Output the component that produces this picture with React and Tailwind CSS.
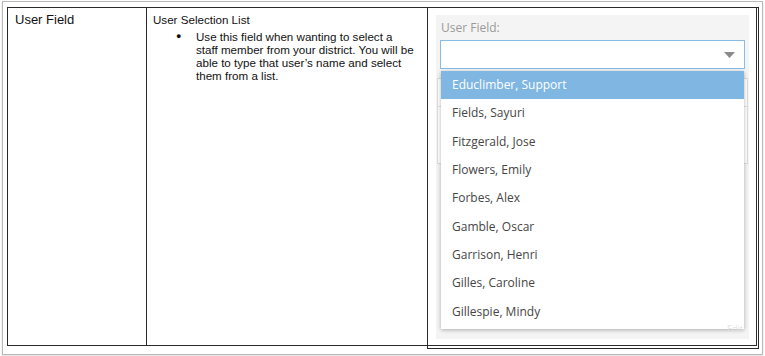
import React from "react";

const users = [
  "Educlimber, Support",
  "Fields, Sayuri",
  "Fitzgerald, Jose",
  "Flowers, Emily",
  "Forbes, Alex",
  "Gamble, Oscar",
  "Garrison, Henri",
  "Gilles, Caroline",
  "Gillespie, Mindy",
];

function UserFieldPreview() {
  return (
    <div className="relative ml-[8px] mr-[9px] mt-[7px] bg-[#f4f4f4] h-[324px] px-[4px] pt-[5px] font-['Open_Sans',sans-serif]">
      <div className="text-[12px] leading-[16px] text-[#9a9a9a] pl-[1px]">User Field:</div>

      {/* select box */}
      <div className="mt-[4px] h-[29px] bg-white border border-[#86bce6] flex items-center justify-end pr-[9px]">
        <svg width="11" height="6" viewBox="0 0 11 6">
          <path d="M0 0 L11 0 L5.5 6 Z" fill="#8a8a8a" />
        </svg>
      </div>

      {/* next field, hidden behind the open list */}
      <div className="mt-[9px] -mx-[3px] h-[86px] bg-white border border-[#dcdcdc] flex flex-col">
        <div className="h-[28px] border-b border-[#e2e2e2]" />
      </div>

      {/* open dropdown list */}
      <div className="absolute left-[5px] right-[5px] top-[56px] bg-white shadow-[0_1px_4px_rgba(0,0,0,0.3)] pb-[3px]">
        {users.map((name, i) => (
          <div
            key={name}
            className={`h-[28.3px] flex items-center pl-[11px] text-[12px] ${
              i === 0 ? "bg-[#80b7e2] text-white" : "text-[#454545]"
            }`}
          >
            {name}
          </div>
        ))}
      </div>

      <div className="absolute right-[6px] bottom-[4px] text-[9px] text-[#e2e2e2]">Edit</div>
    </div>
  );
}

export default function App() {
  return (
    <div className="w-[765px] h-[356px] bg-white pt-[1px] pl-[2px]">
      <div className="w-[761px] h-[354px] border border-[#b8b8b8] shadow-[0_1px_2px_rgba(0,0,0,0.15)] pt-[5px] pl-[4px]">
        <div className="w-[750px] h-[339px] border border-[#2a2a2a] flex font-['Liberation_Sans',Arial,sans-serif] text-[#111]">
          <div className="w-[139px] shrink-0 border-r border-[#2a2a2a] pl-[7px] pt-[4px] text-[13px] leading-[16px]">
            User Field
          </div>

          <div className="w-[280px] shrink-0 pl-[6px] pt-[5px] text-[11.6px] leading-[13px]">
            <div>User Selection List</div>
            <div className="mt-[4px] flex">
              <span className="w-[43px] shrink-0 pl-[23px] text-[9px]">●</span>
              <p className="whitespace-nowrap">
                Use this field when wanting to select a<br />
                staff member from your district. You will be<br />
                able to type that user’s name and select<br />
                them from a list.
              </p>
            </div>
          </div>

          <div className="w-[332px] h-[342px] shrink-0 -mt-px -mr-[3px] border border-[#2a2a2a]">
            <UserFieldPreview />
          </div>
        </div>
      </div>
    </div>
  );
}
